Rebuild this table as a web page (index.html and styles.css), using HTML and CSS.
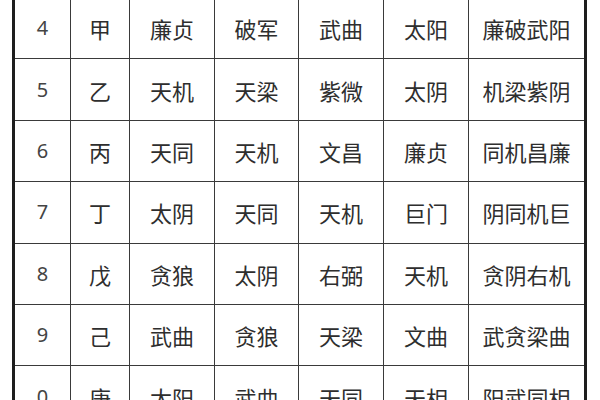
FILE: index.html
```html
<!DOCTYPE html>
<html lang="zh-CN">
<head>
<meta charset="utf-8">
<title>四化表</title>
<link rel="stylesheet" href="styles.css">
</head>
<body>
<div class="page">
  <div class="grid">
    <div class="cell num">4</div><div class="cell">甲</div><div class="cell">廉贞</div><div class="cell">破军</div><div class="cell">武曲</div><div class="cell">太阳</div><div class="cell">廉破武阳</div>
    <div class="cell num">5</div><div class="cell">乙</div><div class="cell">天机</div><div class="cell">天梁</div><div class="cell">紫微</div><div class="cell">太阴</div><div class="cell">机梁紫阴</div>
    <div class="cell num">6</div><div class="cell">丙</div><div class="cell">天同</div><div class="cell">天机</div><div class="cell">文昌</div><div class="cell">廉贞</div><div class="cell">同机昌廉</div>
    <div class="cell num">7</div><div class="cell">丁</div><div class="cell">太阴</div><div class="cell">天同</div><div class="cell">天机</div><div class="cell">巨门</div><div class="cell">阴同机巨</div>
    <div class="cell num">8</div><div class="cell">戊</div><div class="cell">贪狼</div><div class="cell">太阴</div><div class="cell">右弼</div><div class="cell">天机</div><div class="cell">贪阴右机</div>
    <div class="cell num">9</div><div class="cell">己</div><div class="cell">武曲</div><div class="cell">贪狼</div><div class="cell">天梁</div><div class="cell">文曲</div><div class="cell">武贪梁曲</div>
    <div class="cell num">0</div><div class="cell">庚</div><div class="cell">太阳</div><div class="cell">武曲</div><div class="cell">天同</div><div class="cell">天相</div><div class="cell">阳武同相</div>
  </div>
</div>
</body>
</html>
```

FILE: styles.css
```css
html, body {
  margin: 0;
  padding: 0;
  background: #ffffff;
  overflow: hidden;
}

.page {
  width: 600px;
  height: 400px;
  padding-left: 12px;
  box-sizing: border-box;
  background: #ffffff;
  overflow: hidden;
}

.grid {
  display: grid;
  grid-template-columns: 55px 58px 84px 83px 84px 84px 115px;
  grid-auto-rows: 60.4px;
  gap: 1px;
  width: max-content;
  margin-top: -3px;
  background: #3a3a3a;
  border-left: 3px solid #1e1e1e;
  border-right: 3px solid #1e1e1e;
  border-top: 1px solid #3a3a3a;
}

.cell {
  background: #ffffff;
  display: flex;
  align-items: center;
  justify-content: center;
  font-family: "Noto Sans CJK SC", "Noto Sans", sans-serif;
  font-size: 22px;
  color: #2e2e2e;
  line-height: 1;
}

.num {
  font-family: "Noto Sans", "Noto Sans CJK SC", sans-serif;
  font-size: 20px;
  color: #444444;
}
```
